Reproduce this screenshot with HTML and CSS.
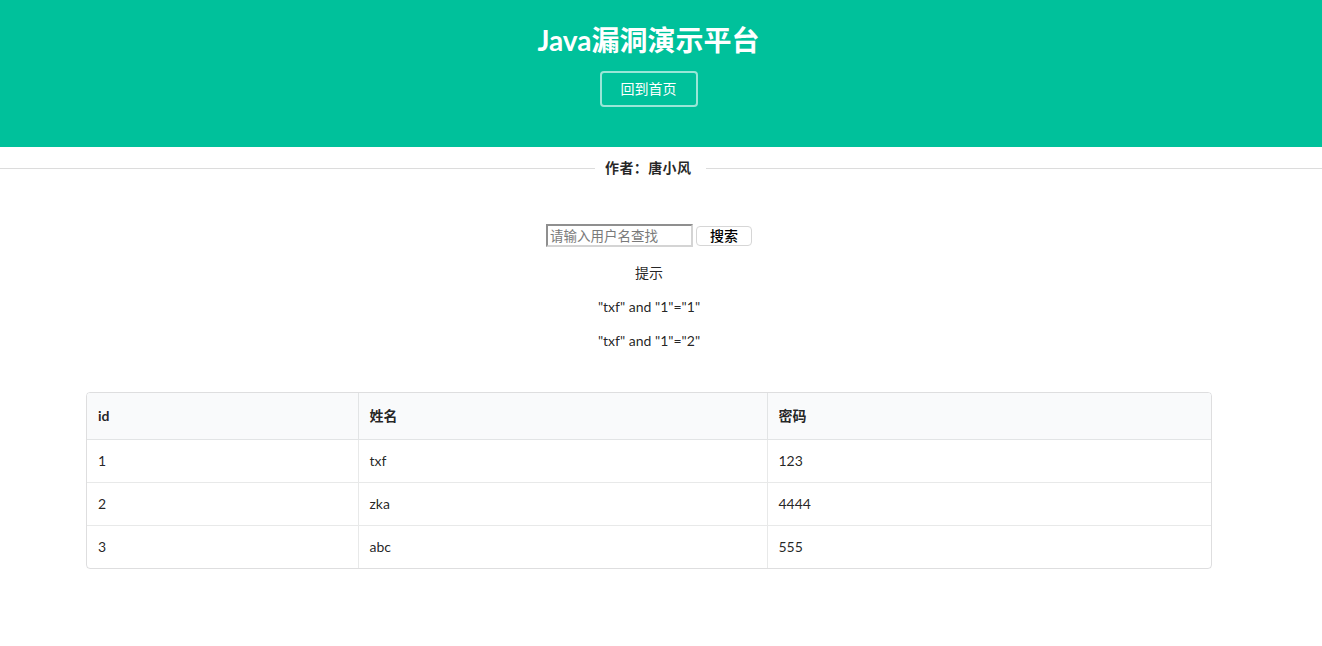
FILE: index.html
```html
<!DOCTYPE html>
<html lang="zh">
<head>
<meta charset="utf-8">
<title>Java漏洞演示平台</title>
<link rel="stylesheet" href="styles.css">
</head>
<body>
<header class="masthead">
  <div class="masthead-inner">
    <h1 class="title">Java漏洞演示平台</h1>
    <a class="home-btn" href="#">回到首页</a>
  </div>
</header>
<div class="divider">
  <span class="divider-line left"></span>
  <span class="divider-text">作者：唐小风</span>
  <span class="divider-line right"></span>
</div>
<main class="content">
  <form class="search">
    <input class="search-input" type="text" placeholder="请输入用户名查找">
    <button class="search-btn" type="button">搜索</button>
  </form>
  <p class="tip">提示</p>
  <p class="tip">"txf" and "1"="1"</p>
  <p class="tip">"txf" and "1"="2"</p>
  <div class="table-wrap">
    <table class="data-table">
      <colgroup>
        <col class="col-id">
        <col class="col-name">
        <col class="col-pwd">
      </colgroup>
      <thead>
        <tr><th>id</th><th>姓名</th><th>密码</th></tr>
      </thead>
      <tbody>
        <tr><td>1</td><td>txf</td><td>123</td></tr>
        <tr><td>2</td><td>zka</td><td>4444</td></tr>
        <tr><td>3</td><td>abc</td><td>555</td></tr>
      </tbody>
    </table>
  </div>
</main>
</body>
</html>
```

FILE: styles.css
```css
* { box-sizing: border-box; }
html, body { margin: 0; padding: 0; }
body {
  font-family: Lato, "Noto Sans CJK SC", sans-serif;
  font-size: 14px;
  line-height: 20px;
  color: rgba(0, 0, 0, 0.87);
  background: #fff;
}
.masthead {
  background: #00c19b;
  height: 147px;
}
.masthead-inner {
  width: 1297px;
  display: flex;
  flex-direction: column;
  align-items: center;
}
.title {
  margin: 23px 0 0;
  font-size: 28px;
  line-height: 34px;
  font-weight: 700;
  color: #fff;
}
.home-btn {
  margin-top: 14px;
  width: 98px;
  height: 36px;
  display: flex;
  align-items: center;
  justify-content: center;
  border: 2px solid rgba(255, 255, 255, 0.6);
  border-radius: 4px;
  color: #fff;
  text-decoration: none;
  font-size: 14px;
}
.divider {
  margin-top: 11px;
  display: flex;
  align-items: center;
  height: 20px;
}
.divider-line {
  height: 1px;
  background: #dcdcdc;
}
.divider-line.left { flex: 0 0 595px; }
.divider-line.right { flex: 1; }
.divider-text {
  padding: 0 15px 0 10px;
  font-weight: 700;
  font-size: 14px;
  letter-spacing: 0.4px;
  color: rgba(0, 0, 0, 0.85);
}
.content {
  width: 1298px;
  display: flex;
  flex-direction: column;
  align-items: center;
}
.search {
  margin: 46px 0 0;
  display: flex;
  align-items: center;
  gap: 3px;
  height: 23px;
}
.search-input {
  width: 147px;
  height: 23px;
  padding: 0 2px;
  border: 2px solid;
  border-color: #8f8f8f #d4d4d4 #d4d4d4 #8f8f8f;
  font-family: Lato, "Noto Sans CJK SC", sans-serif;
  font-size: 13.5px;
  color: #222;
}
.search-input::placeholder { color: #7a7a7a; }
.search-btn {
  width: 56px;
  height: 20px;
  padding: 0;
  display: flex;
  align-items: center;
  justify-content: center;
  line-height: 18px;
  background: #fff;
  border: 1px solid #d6d6d6;
  border-radius: 4px;
  font-family: Lato, "Noto Sans CJK SC", sans-serif;
  font-size: 14px;
  font-weight: 500;
  color: #000;
}
.tip {
  margin: 0;
  line-height: 20px;
}
.search + .tip { margin-top: 16px; }
.tip + .tip { margin-top: 14px; }
.table-wrap {
  margin-top: 41px;
  align-self: flex-start;
  margin-left: 86px;
  width: 1126px;
  border: 1px solid rgba(34, 36, 38, 0.15);
  border-radius: 4px;
  overflow: hidden;
}
.data-table {
  width: 100%;
  border-collapse: collapse;
  table-layout: fixed;
}
.col-id { width: 271px; }
.col-name { width: 409px; }
.col-pwd { width: auto; }
.data-table th {
  background: #f9fafb;
  text-align: left;
  font-weight: 700;
  padding: 13px 11px;
  border-bottom: 1px solid rgba(34, 36, 38, 0.1);
}
.data-table td {
  padding: 11px 11px;
  border-top: 1px solid rgba(34, 36, 38, 0.1);
}
.data-table tbody tr:first-child td { border-top: none; }
.data-table th + th,
.data-table td + td {
  border-left: 1px solid rgba(34, 36, 38, 0.1);
}
```
